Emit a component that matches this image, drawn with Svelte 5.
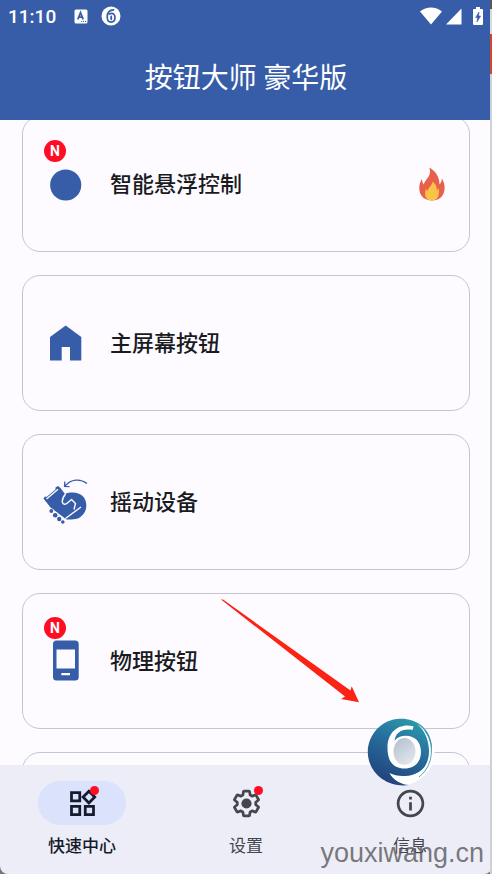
<script>
  const cards = [
    { id: 'float', label: '智能悬浮控制', isNew: true, hot: true },
    { id: 'home', label: '主屏幕按钮' },
    { id: 'shake', label: '摇动设备' },
    { id: 'physical', label: '物理按钮', isNew: true },
    { id: 'more', label: '' }
  ];

  const tabs = [
    { id: 'quick', label: '快速中心', dot: true },
    { id: 'settings', label: '设置', dot: true },
    { id: 'info', label: '信息' }
  ];

  let active = $state('quick');
</script>

<div class="app">
  <header>
    <div class="status">
      <span class="time">11:10</span>
      <svg class="keyboard" width="14" height="15" viewBox="0 0 14 15" aria-hidden="true">
        <rect x="0.5" y="0.5" width="13" height="14" rx="1.5" fill="#fff" />
        <path d="M3.8 10.4 6.5 3.6 9.2 10.4M4.8 8.2h3.4" fill="none" stroke="#375da8" stroke-width="1.7" />
        <path d="M7 12.4h1.2M9 12.4h1.2M11 12.4h1.2" stroke="#375da8" stroke-width="1" />
      </svg>
      <svg width="20" height="20" viewBox="0 0 20 20" aria-hidden="true">
        <circle cx="10" cy="10" r="9.5" fill="#fff" />
        <path d="M13.200 3.800C8.500 3.500 6.200 6.500 6.200 10.800c0 3.500 1.300 5.400 3.900 5.400s3.900-1.900 3.900-4.600-1.400-4.200-3.500-4.200c-1.200 0-2 .400-2.600 1.200" fill="none" stroke="#375da8" stroke-width="1.700" />
        <ellipse cx="10.200" cy="11.800" rx="1" ry="2.600" fill="#375da8" />
      </svg>
      <span class="spacer"></span>
      <svg width="22" height="18" viewBox="0 0 22 18" aria-hidden="true">
        <path d="M0 4.500C6.500-1 15.500-1 22 4.500L11 17.500z" fill="#fff" />
      </svg>
      <svg class="signal" width="16" height="17" viewBox="0 0 16 17" aria-hidden="true">
        <path d="M15.500.5V16.500H0z" fill="#fff" />
      </svg>
      <svg class="battery" width="10" height="18" viewBox="0 0 10 18" aria-hidden="true">
        <path d="M3 0h4v2h2q1 0 1 1v14q0 1-1 1H1q-1 0-1-1V3q0-1 1-1h2z" fill="#fff" />
        <path d="M6 5 2.600 10.600h2L4 15l3.600-6H5.500z" fill="#375da8" stroke="#375da8" stroke-width=".6" />
      </svg>
    </div>
    <h1>按钮大师 豪华版</h1>
  </header>

  <main>
    {#each cards as card (card.id)}
      <button class="card" aria-label={card.label || '更多'}>
        <span class="icon">
          {#if card.isNew}<span class="badge">N</span>{/if}
          <svg width="44" height="44" viewBox="0 0 44 44" fill="#375da8" aria-hidden="true">
            {#if card.id === 'float'}
              <circle cx="21.700" cy="23" r="15.600" />
            {:else if card.id === 'home'}
              <path d="M21.700 4.500 37.300 16v23.500H26V26h-8.300v13.500H6V16z" />
            {:else if card.id === 'shake'}
              <path d="M-.5 18.500 1 16.500 2.500 17 11.500 9.500 11.500 7.500 14 6 16.500 8 21 14C27 11.500 36 12 40 17.500 44 24 42.500 31.500 38 35.500 35 39 30 39.800 22.500 39.500L6.500 27.500z" />
              <path d="M21.500 14Q18 18.500 18.300 22 19.500 25.500 22.500 23.700L27.500 19.500 31.500 23.500 30 29.500M37 27 21.500 38.500M2.500 19 14 9.200" fill="none" stroke="#fdfbff" stroke-width="1.400" stroke-linejoin="round" />
              <circle cx="7.500" cy="31" r="2.500" fill="#fdfbff" />
              <circle cx="11.300" cy="35" r="2.900" fill="#fdfbff" />
              <circle cx="15.500" cy="38.800" r="2.700" fill="#fdfbff" />
              <circle cx="7.300" cy="31" r="1.900" />
              <circle cx="11.200" cy="35.200" r="2.300" />
              <circle cx="15.200" cy="39" r="2.200" />
              <circle cx="18.800" cy="42" r="1.800" />
              <path d="M43 3.500C36-1.800 27-.8 21 6M20.800 1.500l-.3 5 5 .2" fill="none" stroke="#375da8" stroke-width="1.300" />
            {:else if card.id === 'physical'}
              <path fill-rule="evenodd" d="M12.500 1.500h18.700q3.500 0 3.500 3.500v33q0 3.500-3.500 3.500H12.500Q9 41.500 9 38V5q0-3.500 3.500-3.500zM12.500 10.500v19h18.500v-19zM17.300 34v2.300h8.700V34z" />
            {/if}
          </svg>
        </span>
        <span class="label">{card.label}</span>
        {#if card.hot}
          <svg class="flame" width="26" height="34" viewBox="0 0 26 34" aria-hidden="true">
            <path d="M10.200.5C17 4 20.500 10.500 20.500 17.500 22 16 22.800 13.800 22.800 11.500 25 14.500 26 18.500 25.500 23 24.500 29.500 20 33.500 13 33.500S1 29.500.3 22.500C0 18.500 1 14.500 3 12c0 2.200.5 3.800 1.800 5.500C5.500 14 10 10.500 10.800 6.500 11.200 4.500 11 2.300 10.200.5z" fill="#e8604c" />
            <path d="M13.500 14.500C17 17 18 20 17.800 23.500 18.800 22.800 19.200 21.800 19.300 20.800 20.600 24 21 33.500 13 33.500S5.500 25.500 7 21.500c.3 1.300.8 2 1.600 2.500C9 20.500 13.500 18.500 13.500 14.500z" fill="#fbc447" />
          </svg>
        {/if}
      </button>
    {/each}
  </main>

  <nav>
    {#each tabs as tab (tab.id)}
      <button class="tab" class:active={active === tab.id} onclick={() => (active = tab.id)}>
        <span class="pill">
          <svg width="33" height="33" viewBox="0 0 24 24" fill="currentColor" aria-hidden="true">
            {#if tab.id === 'quick'}
              <path d="M16.660 4.520l2.830 2.830-2.830 2.830-2.830-2.830 2.830-2.830M9 5v4H5V5h4m10 10v4h-4v-4h4M9 15v4H5v-4h4m7.660-13.310L11 7.340 16.660 13l5.660-5.660-5.660-5.650zM11 3H3v8h8V3zm10 10h-8v8h8v-8zm-10 0H3v8h8v-8z" />
            {:else if tab.id === 'settings'}
              <path transform="translate(1.200 1.200) scale(.9)" fill="none" stroke="currentColor" stroke-width="2.200" stroke-linejoin="round" d="M19.430 12.980c.04-.32.07-.64.07-.98 0-.34-.03-.66-.07-.98l2.110-1.650c.19-.15.24-.42.12-.64l-2-3.460c-.09-.16-.26-.25-.44-.25-.06 0-.12.01-.17.03l-2.490 1c-.52-.4-1.080-.73-1.690-.98l-.38-2.650C14.460 2.180 14.250 2 14 2h-4c-.25 0-.46.18-.49.42l-.38 2.650c-.61.25-1.170.59-1.690.98l-2.490-1c-.06-.02-.12-.03-.18-.03-.17 0-.34.09-.43.25l-2 3.460c-.13.22-.07.49.12.64l2.110 1.650c-.04.32-.07.65-.07.98 0 .33.03.66.07.98l-2.110 1.650c-.19.15-.24.42-.12.64l2 3.460c.09.16.26.25.44.25.06 0 .12-.01.17-.03l2.490-1c.52.4 1.080.73 1.690.98l.38 2.650c.03.24.24.42.49.42h4c.25 0 .46-.18.49-.42l.38-2.650c.61-.25 1.170-.59 1.690-.98l2.490 1c.06.02.12.03.18.03.17 0 .34-.09.43-.25l2-3.460c.12-.22.07-.49-.12-.64l-2.110-1.650z" />
              <circle cx="12" cy="12" r="3.700" />
            {:else}
              <path d="M11 7h2v2h-2zm0 4h2v6h-2zm1-9C6.480 2 2 6.480 2 12s4.480 10 10 10 10-4.480 10-10S17.520 2 12 2zm0 18c-4.410 0-8-3.590-8-8s3.590-8 8-8 8 3.590 8 8-3.590 8-8 8z" />
            {/if}
          </svg>
          {#if tab.dot}<span class="dot"></span>{/if}
        </span>
        <span>{tab.label}</span>
      </button>
    {/each}
  </nav>

  <svg class="pointer" width="140" height="104" viewBox="0 0 140 104" aria-hidden="true">
    <path d="M1 .5 3 .5 130.500 91.500 131.700 87.300 139 103.300 121 100 125 97.500z" fill="#fb2414" />
  </svg>

  <button class="bubble" aria-label="悬浮按钮">
    <svg width="68" height="68" viewBox="0 0 68 68" aria-hidden="true">
      <defs>
        <linearGradient id="sea" x1=".75" y1="0" x2=".3" y2="1">
          <stop offset="0" stop-color="#2d9dab" />
          <stop offset=".4" stop-color="#26709e" />
          <stop offset="1" stop-color="#22407a" />
        </linearGradient>
        <linearGradient id="pearl" x1=".2" y1="0" x2=".8" y2="1">
          <stop offset="0" stop-color="#b4c2cf" />
          <stop offset="1" stop-color="#e4e8ee" />
        </linearGradient>
      </defs>
      <circle cx="34.500" cy="34" r="33" fill="#fff" />
      <path d="M33 .8C49 .3 62 10 64.500 25 67 43 54 58 38 58 32 58.500 27 57 22.500 55 26 62 34 66.500 42 67 20 70 1 55 .8 34 1 16 15 1.300 33 .8z" fill="url(#sea)" />
      <path d="M50 6C60 12 65 23 64.500 35 63 46 57 55 49 59 57 52 62.500 43 62 32 61.500 21 57.500 12 50 6z" fill="#fff" />
      <path d="M58 13C64 21 66 32 63 43 61 50 57 55 52 59" fill="none" stroke="#2a91a9" stroke-width=".8" />
      <path d="M46.500 8.300C32 4.500 20.500 14 20.500 29.500 20.500 43 26 50.500 37.500 50.500 48 50.500 54 43.500 54 34 54 24 48 17.800 39 17.800c-5 0-9 1.700-11.500 5C28.500 15 35 9.800 45.500 12z" fill="#fff" />
      <ellipse cx="37.500" cy="33.500" rx="11" ry="13.500" fill="url(#pearl)" />
    </svg>
  </button>

  <span class="watermark">youxiwang.cn</span>
  <span class="edge"></span>
</div>

<style>
  :global(body) {
    margin: 0;
    background: #fdfbff;
  }
  .app {
    position: relative;
    display: flex;
    flex-direction: column;
    height: 100vh;
    overflow: hidden;
    font-family: Roboto, 'Noto Sans CJK SC', sans-serif;
    color: #1b1b1f;
    background: #fdfbff;
  }
  svg {
    display: block;
    flex: none;
    overflow: visible;
  }
  button {
    border: 0;
    padding: 0;
    font: inherit;
    color: inherit;
    background: none;
    cursor: pointer;
  }
  header {
    position: relative;
    z-index: 1;
    flex: none;
    color: #fff;
    background: #375da8;
  }
  .status {
    display: flex;
    align-items: center;
    height: 32px;
    padding: 0 9px 0 8px;
  }
  .time {
    padding-top: 2px;
    font-size: 19px;
    line-height: 30px;
    font-weight: 500;
  }
  .keyboard {
    margin: 0 13px 0 18px;
  }
  .spacer {
    flex: 1;
  }
  .signal {
    margin: 0 11px 0 4px;
  }
  h1 {
    margin: 0;
    padding: 24px 0;
    font-size: 28px;
    line-height: 40px;
    font-weight: 400;
    font-family: 'Noto Sans CJK SC', sans-serif;
    text-align: center;
  }
  main {
    display: flex;
    flex: 1;
    flex-direction: column;
    gap: 23px;
    min-height: 0;
    margin-top: -4px;
    padding: 0 22px;
    overflow-y: auto;
    scrollbar-width: none;
  }
  .card {
    display: flex;
    flex: none;
    align-items: center;
    gap: 22px;
    height: 136px;
    box-sizing: border-box;
    padding: 0 24px 0 21px;
    border: 1px solid #c5c5d0;
    border-radius: 18px;
    text-align: left;
  }
  .icon {
    position: relative;
  }
  .badge {
    position: absolute;
    top: -22px;
    left: 0;
    width: 22px;
    border-radius: 50%;
    font-size: 14px;
    line-height: 22px;
    font-weight: 700;
    text-align: center;
    color: #fff;
    background: #ff0d25;
  }
  .label {
    flex: 1;
    padding-bottom: 4px;
    font-family: 'Noto Sans CJK SC', sans-serif;
    font-size: 22px;
    line-height: 32px;
    font-weight: 500;
  }
  nav {
    position: relative;
    display: flex;
    flex: none;
    padding: 16px 0 17px;
    background: #ecedf6;
    border-radius: 0 0 8px 8px;
    box-shadow: 0 8px 0 #77777b;
  }
  .tab {
    display: flex;
    flex: 1;
    flex-direction: column;
    align-items: center;
    gap: 8px;
    font-family: 'Noto Sans CJK SC', sans-serif;
    font-size: 17px;
    line-height: 24px;
    color: #44464f;
  }
  .active {
    font-weight: 500;
    color: #151b2c;
  }
  .pill {
    position: relative;
    display: flex;
    align-items: center;
    justify-content: center;
    width: 88px;
    height: 44px;
    border-radius: 22px;
  }
  .active .pill {
    background: #dae2fc;
  }
  .dot {
    position: absolute;
    top: 5px;
    right: 27px;
    width: 9px;
    height: 9px;
    border-radius: 50%;
    background: #ff0d25;
  }
  .pointer {
    position: absolute;
    left: 220px;
    bottom: 171px;
  }
  .bubble {
    position: absolute;
    right: 57px;
    bottom: 88px;
    border-radius: 50%;
  }
  .watermark {
    position: absolute;
    right: 8px;
    bottom: 5px;
    font-family: 'Liberation Sans', Arial, sans-serif;
    font-size: 27px;
    line-height: 32px;
    color: rgba(80, 80, 84, 0.75);
  }
  .edge {
    position: absolute;
    z-index: 2;
    top: 0;
    right: 0;
    bottom: 0;
    width: 2px;
    background: linear-gradient(to bottom, #55565a 0, #55565a 9px, #d9dade 9px, #d9dade 34px, #d2452a 34px, #d2452a 74px, #d0d1d6 74px, #d0d1d6 100%);
  }
</style>
